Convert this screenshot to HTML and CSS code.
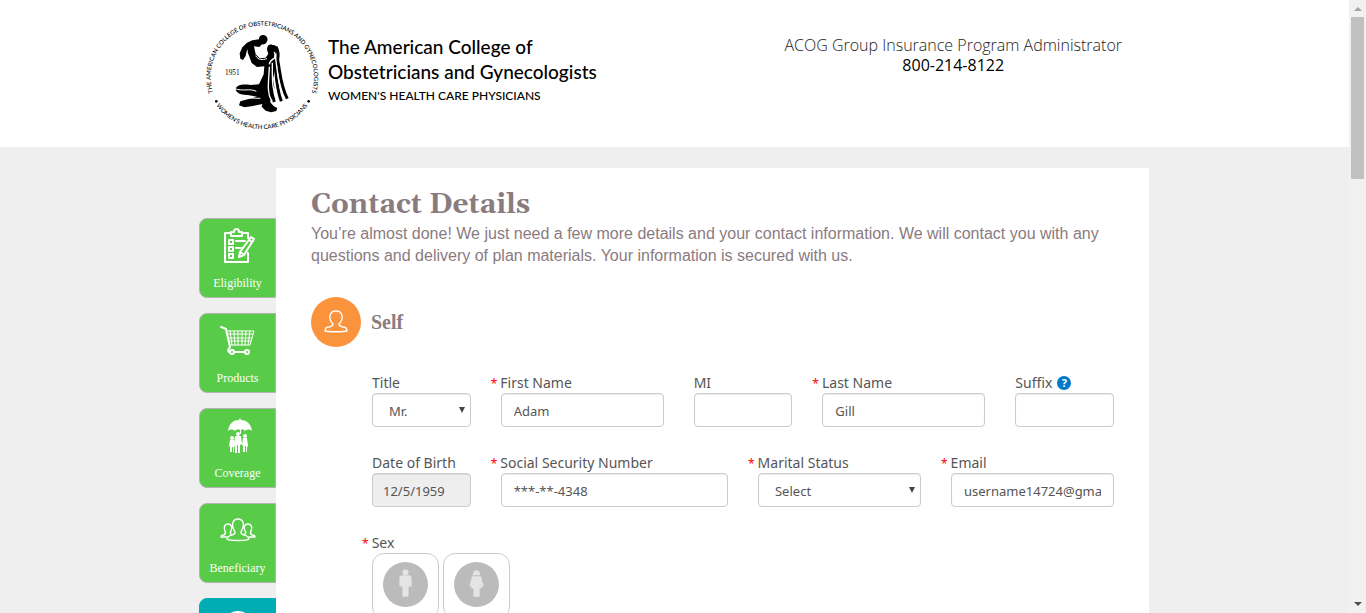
FILE: index.html
```html
<!DOCTYPE html>
<html lang="en">
<head>
<meta charset="utf-8">
<meta name="viewport" content="width=device-width, initial-scale=1">
<title>Contact Details</title>
<link rel="stylesheet" href="styles.css">
</head>
<body>
<div class="page">
  <header class="header">
    <div class="container header-row">
      <a class="brand" href="#">
        <svg class="seal" viewBox="0 0 372 372" role="img" aria-label="College seal">
          <defs>
            <path id="arc-top" d="M50 268 A155 155 0 1 1 330 268"/>
            <path id="arc-bottom" d="M44 274 A168 168 0 0 0 334 274"/>
          </defs>
          <text class="seal-text"><textPath href="#arc-top" startOffset="50%" text-anchor="middle">THE AMERICAN COLLEGE OF OBSTETRICIANS AND GYNECOLOGISTS</textPath></text>
          <text class="seal-text"><textPath href="#arc-bottom" startOffset="50%" text-anchor="middle">WOMEN'S HEALTH CARE PHYSICIANS</textPath></text>
          <circle cx="52" cy="274" r="4"/><circle cx="329" cy="274" r="4"/>
          <text class="seal-year" x="78" y="196">1951</text>
          <path d="M180 88c-1-8 6-14 14-13 9 1 13 9 11 17-2 8-9 12-16 11l-8 8-16-2-14 4-8 10-3 15-8 12-8-4-2-16 8-18 14-14 16-7z"/>
          <path d="M147 106c6-5 14-3 18 3l5 24 12 12 18-2 8-12-4-12c0-12 8-18 16-14 9-2 16 6 15 15-1 8-5 12-9 16l4 14-1 26-7 30 4 26-4 30-9 12c5 8 8 14 22 20l-3 9-16 4-16-5-12-12 2-8-28 6-26 4-16-6 4-12 50-14-28-5c-20 1-35-6-36-17 2-14 24-16 44-13l26-2 14-30 2-24-22 2-16-12-12-32z"/>
          <path class="drape" d="M231 110c8 14 7 29 5 40 8 40 8 76 29 116M228 152c4 42 3 80 19 122M218 160c-3 50-5 76 8 116"/>
          <path class="fold" d="M226 126c3 6 4 12 0 19-8 4-14 8-15 18M230 145c6 40 5 80 26 124M220 158c0 46-2 82 15 116M211 170c-1 40-9 76 6 101"/>
          <path class="contour" d="M108 236c22 9 45-2 64 8M146 264l38 1M170 137c8 14 20 13 34 9"/>
        </svg>
        <span class="brand-text">
          <span class="brand-name">The American College of<br>Obstetricians and Gynecologists</span>
          <span class="brand-sub">WOMEN'S HEALTH CARE PHYSICIANS</span>
        </span>
      </a>
      <div class="admin">
        <span class="admin-title">ACOG Group Insurance Program Administrator</span>
        <span class="admin-phone">800-214-8122</span>
      </div>
    </div>
  </header>

  <div class="container layout">
    <nav class="tabs" aria-label="Steps">
      <a class="tab" href="#">
        <svg class="tab-icon" viewBox="0 0 36 36" aria-hidden="true">
          <path class="line" d="M10 5H5v29h23V25M22 5h6v5M11 4h3c0-4 5-4 5 0h3v4H11zM9 12h4v4H9zM9 19h4v4H9zM9 26h4v4H9zM16 13h9M16 20h5"/>
          <path class="line" d="M31 9l3 2-10 16-5 2 1-5zM29 12l3 2M20 24l3 2"/>
        </svg>
        <span>Eligibility</span>
      </a>
      <a class="tab" href="#">
        <svg class="tab-icon" viewBox="0 0 36 36" aria-hidden="true">
          <path class="line" d="M1 4l5 2 4 18c-1 2-3 3-1 5h18"/>
          <path class="thin" d="M7 8h27l-4 14H10M8 11h25M9 15h23M10 18h21M10 8l2 14M14 8l1 14M18 8v14M22 8v14M26 8l-1 14M30 8l-2 14"/>
          <circle class="hub" cx="12" cy="29" r="2"/><circle class="hub" cx="27" cy="29" r="2"/>
        </svg>
        <span>Products</span>
      </a>
      <a class="tab" href="#">
        <svg class="tab-icon" viewBox="0 0 36 36" aria-hidden="true">
          <path d="M8 13C9 5 14 2 19 2l1-2 1 2c6 0 10 4 11 11-2-2-5-2-7 0-2-2-3-2-4-1v4h-1v-4c-2-1-3-1-5 1-2-2-5-2-7 0z"/>
          <circle cx="18" cy="16" r="2"/><circle cx="12" cy="20" r="2"/><circle cx="25" cy="18" r="2"/>
          <path d="M15 18h6l1 8-2 1v8h-2v-8h-1v8h-2v-8l-1-1zM10 22h4l1 6-1 1v5h-1v-5h-1v5h-2v-5l-1-1zM23 20h4l1 8-1 1v5h-1v-6h-1v6h-2v-6l-1-1z"/>
        </svg>
        <span>Coverage</span>
      </a>
      <a class="tab" href="#">
        <svg class="tab-icon" viewBox="0 0 36 36" aria-hidden="true">
          <path class="fine" d="M15 20c0-2 0-2-1-3-3-6-1-11 4-11s7 5 4 11c-1 1-1 1-1 3 1 3 7 1 8 6-2 2-20 2-22 0 1-5 7-3 8-6zM11 21c-1-1-1-2 0-3 2-4 0-7-3-7s-5 3-3 7c1 2 1 3-1 4-2 0-3 1-3 2h6M25 21c1-1 1-2 0-3-2-4 0-7 3-7s5 3 3 7c-1 2-1 3 1 4 2 0 3 1 3 2h-6"/>
        </svg>
        <span>Beneficiary</span>
      </a>
      <a class="tab tab-current" href="#" aria-current="step" aria-label="Contact">
        <svg class="tab-icon" viewBox="0 0 36 36" aria-hidden="true"><circle cx="18" cy="18" r="15"/></svg>
      </a>
    </nav>

    <main class="panel">
      <h1 class="title">Contact Details</h1>
      <p class="intro">You’re almost done! We just need a few more details and your contact information. We will contact you with any questions and delivery of plan materials. Your information is secured with us.</p>

      <div class="person">
        <span class="avatar">
          <svg viewBox="0 0 24 24" width="24" height="24" aria-hidden="true"><path d="M9 14C4 9 5 1 12 1s8 8 3 13c0 2 1 2 4 3 3 0 4 2 4 4-3 1-19 1-22 0 0-2 1-4 4-4 3-1 4-1 4-3z"/></svg>
        </span>
        <h2 class="person-name">Self</h2>
      </div>

      <form class="fields">
        <div class="field span-2">
          <label class="label" for="title">Title</label>
          <div class="select-wrap"><select class="control select" id="title"><option>Mr.</option></select><span class="arrow" aria-hidden="true"></span></div>
        </div>
        <div class="field span-3">
          <label class="label required" for="first">First Name</label>
          <input class="control" id="first" type="text" value="Adam">
        </div>
        <div class="field span-2">
          <label class="label" for="mi">MI</label>
          <input class="control" id="mi" type="text">
        </div>
        <div class="field span-3">
          <label class="label required" for="last">Last Name</label>
          <input class="control" id="last" type="text" value="Gill">
        </div>
        <div class="field span-2">
          <div class="label-row"><label class="label" for="suffix">Suffix</label><button class="help" type="button" aria-label="Help with suffix">?</button></div>
          <input class="control" id="suffix" type="text">
        </div>
        <div class="field span-2">
          <label class="label" for="dob">Date of Birth</label>
          <input class="control readonly" id="dob" type="text" value="12/5/1959" readonly>
        </div>
        <div class="field span-4">
          <label class="label required" for="ssn">Social Security Number</label>
          <input class="control" id="ssn" type="text" value="***-**-4348">
        </div>
        <div class="field span-3">
          <label class="label required" for="marital">Marital Status</label>
          <div class="select-wrap"><select class="control select" id="marital"><option>Select</option></select><span class="arrow" aria-hidden="true"></span></div>
        </div>
        <div class="field span-3">
          <label class="label required" for="email">Email</label>
          <input class="control" id="email" type="text" value="username14724@gmail.com">
        </div>
        <fieldset class="field span-12 sex">
          <legend class="label required">Sex</legend>
          <div class="choices">
            <label class="choice">
              <input class="choice-input" type="radio" name="sex" value="male" aria-label="Male">
              <svg class="choice-icon" viewBox="0 0 44 44" aria-hidden="true"><circle class="disc" cx="22" cy="22" r="22"/><circle cx="22" cy="10" r="3"/><path d="M19 13h6c2 0 3 1 3 3v8h-3v10h-6V24h-3v-8c0-2 1-3 3-3z"/></svg>
            </label>
            <label class="choice">
              <input class="choice-input" type="radio" name="sex" value="female" aria-label="Female">
              <svg class="choice-icon" viewBox="0 0 44 44" aria-hidden="true"><circle class="disc" cx="22" cy="22" r="22"/><path d="M18 13c1-2 1-5 4-5s3 3 4 5zM19 14h6c2 0 2 1 2 3l2 6-2 2-1-4 1 5h-2v8h-6v-8h-2l1-5-1 4-2-2 2-6c0-2 0-3 2-3z"/></svg>
            </label>
          </div>
        </fieldset>
      </form>
    </main>
  </div>
</div>
<div class="scrollbar" aria-hidden="true">
  <span class="scroll-arrow scroll-up"></span>
  <span class="scroll-thumb"></span>
  <span class="scroll-arrow scroll-down"></span>
</div>
</body>
</html>
```
FILE: styles.css
```css
* { box-sizing: border-box; }

body {
  margin: 0;
  height: 100vh;
  display: flex;
  overflow: hidden;
  background: #efefef;
  color: #8a7b7f;
  font-family: "Noto Sans", sans-serif;
}

.page { flex: 1; min-width: 0; overflow: hidden; }
.container { width: 100%; max-width: 951px; margin: 0 auto; }

/* Header */
.header { background: #fff; padding: 10px 0 13px; }
.header-row { display: flex; justify-content: space-between; align-items: flex-start; }
.brand { display: flex; color: #000; text-decoration: none; }
.seal { width: 124px; height: 124px; overflow: visible; }
.seal-text { font: 500 18px "Lato", sans-serif; }
.seal-year { font: 22px "Liberation Serif", serif; }
.drape, .fold, .contour { fill: none; stroke: #000; stroke-width: 9; }
.fold { stroke: #fff; stroke-width: 4; }
.contour { stroke: #fff; stroke-width: 3; }
.brand-text { display: flex; flex-direction: column; padding: 24px 0 0 5px; font-family: "Lato", sans-serif; }
.brand-name { font-size: 19px; line-height: 25px; font-weight: 500; }
.brand-sub { font-size: 12px; line-height: 24px; font-weight: 500; }
.admin { display: flex; flex-direction: column; align-items: center; padding: 25px 28px 0 0; font-family: "Open Sans", sans-serif; color: #222; }
.admin-title { font-size: 16px; line-height: 20px; font-weight: 300; }
.admin-phone { font-size: 16px; line-height: 20px; font-weight: 500; color: #000; }

/* Step tabs */
.layout { display: grid; grid-template-columns: 77px minmax(0, 1fr); padding: 21px 1px 0 0; }
.tabs { display: flex; flex-direction: column; gap: 15px; padding-top: 50px; }
.tab {
  height: 80px;
  display: flex;
  flex-direction: column;
  align-items: center;
  justify-content: space-between;
  padding: 9px 0 6px;
  border: 1px solid #b3b3b3;
  border-radius: 8px 0 0 8px;
  background: #58cc48;
  color: #fff;
  font: 12px/16px "Liberation Serif", serif;
  text-decoration: none;
}
.tab-current { background: #00adb5; border-color: #00adb5; }
.tab-icon { width: 36px; height: 36px; fill: #fff; }
.line, .thin, .fine { fill: none; stroke: #fff; stroke-width: 2; stroke-linejoin: round; stroke-linecap: round; }
.thin { stroke-width: 1; }
.fine { stroke-width: 1.4; }
.hub { fill: #58cc48; stroke: #fff; stroke-width: 2; }

/* Panel */
.panel { background: #fff; padding: 19px 35px 40px; }
.title { margin: 0; font: bold 28px/36px Georgia, "Gelasio", "Liberation Serif", serif; }
.intro { margin: 0; font: 16px/22px "Liberation Sans", sans-serif; }
.person { display: flex; align-items: center; gap: 10px; padding: 30px 0 25px; }
.avatar { width: 50px; height: 50px; border-radius: 50%; display: flex; align-items: center; justify-content: center; background: #fb923c; }
.avatar path { fill: none; stroke: #fff; stroke-width: 1.4; }
.person-name { margin: 0; font: bold 20px/24px "Liberation Serif", serif; }

/* Form */
.fields { display: grid; grid-template-columns: repeat(12, minmax(0, 1fr)); gap: 25px 30px; padding-left: 61px; }
.field { display: flex; flex-direction: column; align-items: stretch; min-width: 0; }
.span-2 { grid-column: span 2; }
.span-3 { grid-column: span 3; }
.span-4 { grid-column: span 4; }
.span-12 { grid-column: span 12; }
.label { font-size: 14px; line-height: 21px; color: #555; white-space: nowrap; }
.required { margin-left: -10px; }
.required::before { content: "*"; color: #f00; font-size: 12px; line-height: 1; margin-right: 3px; }
.label-row { display: flex; align-items: center; gap: 5px; }
.help { width: 14px; height: 14px; padding: 0; border: 0; border-radius: 50%; background: #0078c8; color: #fff; font: bold 11px/14px "Noto Sans", sans-serif; }
.control {
  width: 100%;
  height: 34px;
  padding: 2px 12px 0;
  border: 1px solid #ccc;
  border-radius: 4px;
  background: #fff;
  box-shadow: inset 0 1px 1px rgba(0, 0, 0, .08);
  color: #555;
  font: 13px/20px "Noto Sans", sans-serif;
}
.readonly { background: #eee; padding-left: 10px; }
.select-wrap { position: relative; }
.select { display: block; appearance: none; padding-left: 16px; }
.arrow { position: absolute; right: 6px; top: 14px; border: solid transparent; border-width: 6px 3px 0; border-top-color: #444; pointer-events: none; }
.sex { display: block; margin: 0; padding: 0; border: 0; }
.sex .label { padding: 0; }
.choices { display: flex; gap: 4px; }
.choice { position: relative; width: 67px; height: 66px; display: flex; justify-content: center; padding-top: 8px; border: 1px solid #ccc; border-radius: 12px; }
.choice-input { position: absolute; inset: 0; margin: 0; opacity: 0; }
.choice-icon { width: 45px; height: 45px; fill: #e4e4e4; }
.disc { fill: #bbb; }

/* Scrollbar */
.scrollbar { width: 17px; display: flex; flex-direction: column; align-items: center; padding: 7px 0; background: #f1f1f1; }
.scroll-arrow { border: 4px solid transparent; }
.scroll-up { border-top-width: 0; border-bottom-color: #a3a3a3; }
.scroll-down { margin-top: auto; border-bottom-width: 0; border-top-color: #505050; }
.scroll-thumb { width: 13px; height: 162px; margin-top: 6px; background: #c1c1c1; }
```
